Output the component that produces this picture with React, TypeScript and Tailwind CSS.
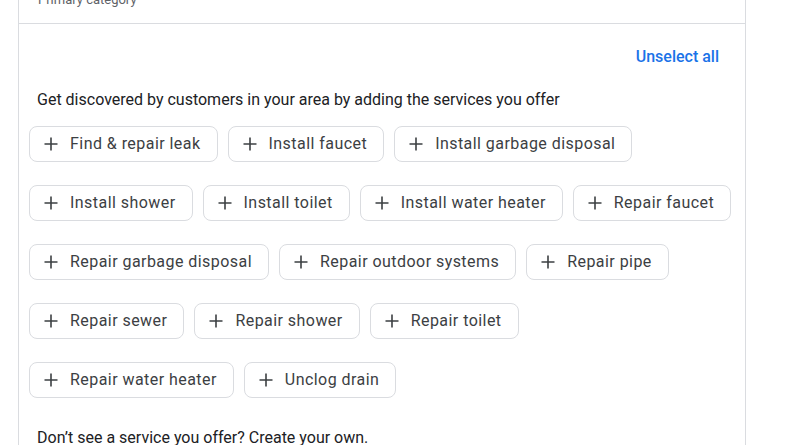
import React from "react";

const rows = [
  ["Find & repair leak", "Install faucet", "Install garbage disposal"],
  ["Install shower", "Install toilet", "Install water heater", "Repair faucet"],
  ["Repair garbage disposal", "Repair outdoor systems", "Repair pipe"],
  ["Repair sewer", "Repair shower", "Repair toilet"],
  ["Repair water heater", "Unclog drain"],
];

function Chip({ label }: { label: string }) {
  return (
    <div className="flex items-center h-[36px] pl-[13px] pr-[16px] border border-[#dadce0] rounded-[8px] text-[#3c4043] text-[16px] tracking-[0.45px] whitespace-nowrap">
      <svg width="16" height="16" viewBox="0 0 16 16" className="mr-[11px]">
        <path d="M8 1.5v13M1.5 8h13" stroke="#3c4043" strokeWidth="1.6" />
      </svg>
      {label}
    </div>
  );
}

export default function App() {
  return (
    <div className="w-[800px] h-[445px] overflow-hidden bg-white" style={{ fontFamily: "Roboto, 'Liberation Sans', sans-serif" }}>
      <div className="ml-[18px] w-[728px] border-x border-[#dadce0] h-[445px]">
        <div className="h-[24px] border-b border-[#dadce0] relative">
          <div className="absolute left-[19px] top-[-10px] text-[13px] text-[#5f6368]">Primary category</div>
        </div>
        <div className="pl-[18px] pr-[26px]">
          <div className="flex justify-end pt-[23px] h-[66px]">
            <span className="text-[16px] font-medium text-[#1a73e8] leading-[20px]">Unselect all</span>
          </div>
          <div className="mt-[0px] text-[16px] text-[#202124] leading-[20px]">
            Get discovered by customers in your area by adding the services you offer
          </div>
          <div className="mt-[16px] ml-[-8px] flex flex-col gap-[23px]">
            {rows.map((r, i) => (
              <div key={i} className="flex gap-[10px]">
                {r.map((l) => (
                  <Chip key={l} label={l} />
                ))}
              </div>
            ))}
          </div>
          <div className="mt-[30px] text-[16px] text-[#202124] leading-[20px]">
            Don’t see a service you offer? Create your own.
          </div>
        </div>
      </div>
    </div>
  );
}
